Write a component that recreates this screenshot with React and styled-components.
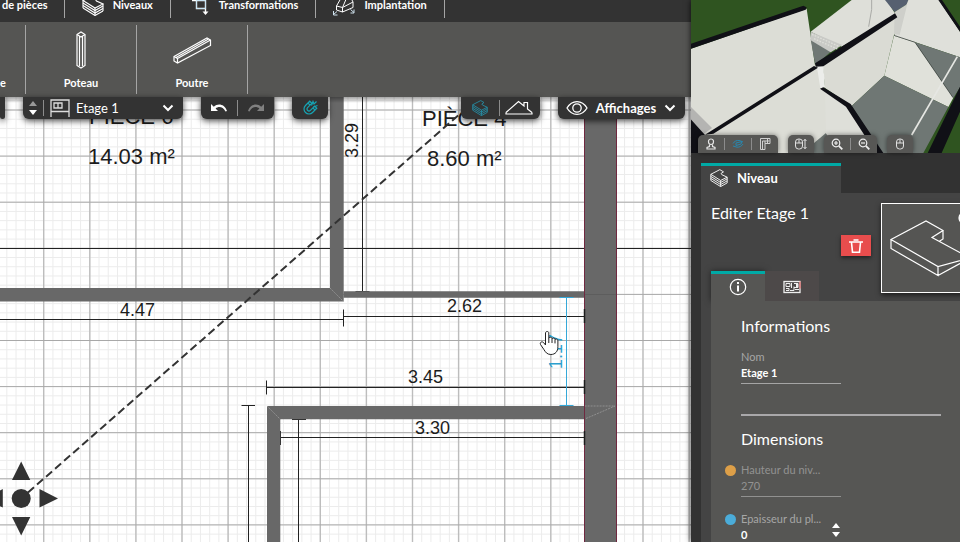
import React, { useState } from 'react';
import styled, { createGlobalStyle } from 'styled-components';

const GlobalStyle = createGlobalStyle`
  * {
    box-sizing: border-box;
  }

  body {
    margin: 0;
    overflow: hidden;
    font-family: Lato, 'Liberation Sans', sans-serif;
    font-size: 11px;
    color: #fff;
    background: #323232;
  }

  button, input, select {
    margin: 0;
    padding: 0;
    border: none;
    background: none;
    color: inherit;
    font: inherit;
  }

  button {
    cursor: pointer;
  }

  svg {
    display: block;
    flex: none;
  }
`;

const Page = styled.div`
  display: grid;
  grid-template-columns: minmax(0, 1fr) 269px;
  height: 100vh;
  overflow: hidden;
`;

const Workspace = styled.main`
  display: flex;
  flex-direction: column;
  min-width: 0;
  min-height: 0;
  overflow: hidden;
`;

const TabBar = styled.nav`
  display: flex;
  align-items: flex-start;
  height: 22px;
  overflow: hidden;
  background: #333;
`;

const TabButton = styled.button`
  display: flex;
  flex: none;
  align-items: center;
  gap: 9px;
  height: 18px;
  padding: ${props => (props.$first ? '0 16px 8px 2px' : '0 17px 8px')};
  border-right: 1px solid #a5a5a5;
  font-weight: 700;
  line-height: 10px;
  white-space: nowrap;
`;

const Ribbon = styled.div`
  display: flex;
  height: 75px;
  padding: 3px 0;
  overflow: hidden;
  background: #555553;
`;

const RibbonButton = styled.button`
  display: flex;
  flex: none;
  flex-direction: column;
  align-items: center;
  justify-content: space-between;
  width: ${props => (props.$edge ? '26px' : '111px')};
  padding: 5px 0 3px;
  border-right: 1px solid #a5a5a5;
  font-weight: 700;
  line-height: 16px;
`;

const RibbonEdgeLabel = styled.span`
  align-self: flex-start;
  margin-top: auto;
`;

const CanvasArea = styled.section`
  position: relative;
  flex: 1;
  min-height: 0;
  background: #fff;
`;

const FloatingTools = styled.div`
  position: absolute;
  top: 0;
  left: 0;
  right: 0;
  display: flex;
  justify-content: space-between;
  padding-right: 6px;
  background: linear-gradient(rgba(0, 0, 0, 0.35), transparent 6px);
`;

const ToolRow = styled.div`
  display: flex;
  gap: 18px;
`;

const ToolGroup = styled.div`
  display: flex;
  align-items: center;
  gap: ${props => props.$gap || '0'};
  width: ${props => props.$width};
  height: 22px;
  padding: ${props => props.$padding || '0'};
  border-radius: 0 0 6px 6px;
  background: #333;
  box-shadow: 0 2px 6px rgba(0, 0, 0, 0.7);
`;

const ToolButton = styled.button`
  display: flex;
  flex: 1;
  align-items: center;
  justify-content: ${props => (props.$spread ? 'space-between' : 'center')};
  height: 100%;
  font-size: 13px;
  font-weight: 700;
`;

const Divider = styled.span`
  flex: none;
  width: 1px;
  height: ${props => props.$height || '16px'};
  background: #8c8c8c;
`;

const SortButtons = styled.div`
  display: flex;
  flex-direction: column;
  gap: 4px;
`;

const ArrowButton = styled.button`
  width: 0;
  height: 0;
  border-left: 4px solid transparent;
  border-right: 4px solid transparent;
  ${props => (props.$down ? 'border-top' : 'border-bottom')}: 5px solid ${props => props.$color || '#fff'};
`;

const LevelSelect = styled.select`
  flex: 1;
  min-width: 0;
  height: 22px;
  appearance: none;
  outline: none;
  font-size: 13px;
`;

const Plan = styled.svg`
  width: 100%;
  height: 100%;
  font-family: 'Liberation Sans', Arial, sans-serif;
`;

const Sidebar = styled.aside`
  position: relative;
  display: flex;
  flex-direction: column;
  min-height: 0;
  overflow: hidden;
  background: #323232;
`;

const SidebarFrame = styled.div`
  position: relative;
  display: grid;
  min-height: 0;
  box-shadow: 0 0 6px rgba(0, 0, 0, 0.8);
`;

const Preview = styled.section`
  position: relative;
  flex: none;
  height: 153px;
`;

const Scene = styled.svg`
  width: 100%;
  height: 100%;
`;

const PreviewTools = styled.div`
  position: absolute;
  left: 7px;
  bottom: 0;
  display: flex;
  gap: 10px;
`;

const PreviewGroup = styled.div`
  display: flex;
  align-items: center;
  height: 18px;
  border-radius: 5px 5px 0 0;
  background: #575755;
  box-shadow: 0 0 5px rgba(0, 0, 0, 0.5);
`;

const PreviewButton = styled.button`
  display: flex;
  align-items: center;
  justify-content: center;
  width: 26px;
  height: 18px;
`;

const Inspector = styled.section`
  display: flex;
  flex: 1;
  flex-direction: column;
  min-height: 0;
  padding: 10px 0 0 10px;
`;

const InspectorTab = styled.button`
  display: flex;
  flex: none;
  align-items: center;
  gap: 9px;
  width: 140px;
  height: 30px;
  padding: 0 0 3px 9px;
  border-top: 3px solid #00aaa6;
  background: #444;
  font-size: 13px;
  font-weight: 700;
`;

const InspectorBody = styled.div`
  display: flex;
  flex: 1;
  flex-direction: column;
  min-height: 0;
  padding-left: 10px;
  background: #444;
`;

const InspectorHead = styled.div`
  display: grid;
  grid-template-columns: 160px 100px;
  column-gap: 10px;
  flex: none;
  height: 78px;
  padding-top: 10px;
`;

const HeadInfo = styled.div`
  display: flex;
  flex-direction: column;
  gap: 12px;
`;

const Title = styled.h1`
  margin: 0;
  font-size: 16px;
  font-weight: 400;
  line-height: 20px;
`;

const DeleteButton = styled.button`
  display: flex;
  align-items: center;
  justify-content: center;
  align-self: flex-end;
  width: 30px;
  height: 21px;
  background: #e84d4d;
  box-shadow: 0 2px 4px rgba(0, 0, 0, 0.5);
`;

const Thumbnail = styled.button`
  display: block;
  width: 100px;
  height: 90px;
  border: 1px solid #fff;
  background: #555553;
  box-shadow: 0 2px 5px rgba(0, 0, 0, 0.6);
`;

const SubTabs = styled.div`
  display: flex;
  flex: none;
`;

const SubTab = styled.button`
  display: flex;
  align-items: center;
  justify-content: center;
  width: 54px;
  height: 30px;
  padding-bottom: 2px;
  border-top: 3px solid ${props => (props.$active ? '#00aaa6' : '#4d4949')};
  background: ${props => (props.$active ? '#565654' : '#4d4949')};
  box-shadow: ${props => (props.$active ? '0 0 6px rgba(0, 0, 0, 0.5)' : 'none')};
`;

const Form = styled.form`
  position: relative;
  display: flex;
  flex: 1;
  flex-direction: column;
  min-height: 0;
  padding: 16px 0 0 30px;
  background: #565654;
`;

const SectionTitle = styled.h2`
  flex: none;
  margin: 0 0 14px;
  font-size: 16px;
  font-weight: 400;
  line-height: 18px;
`;

const Rule = styled.hr`
  flex: none;
  width: 200px;
  margin: 30px 0 14px;
  border: none;
  border-top: 2px solid #a9a8aa;
`;

const FieldRow = styled.div`
  display: flex;
  flex: none;
  align-items: flex-start;
  margin-bottom: ${props => (props.$last ? '0' : '14px')};
  margin-left: -16px;
`;

const Dot = styled.span`
  width: 11px;
  height: 11px;
  margin: 3px 5px 0 0;
  border-radius: 50%;
  background: ${props => props.$color};
`;

const Field = styled.div`
  display: flex;
  flex: none;
  flex-direction: column;
  width: 100px;
  padding-bottom: 2px;
  border-bottom: 1px solid #a5a5a5;
  opacity: ${props => (props.$disabled ? 0.75 : 1)};
`;

const FieldLabel = styled.label`
  color: #a6a6a6;
  font-size: 11px;
  line-height: 16px;
  white-space: nowrap;
`;

const FieldInput = styled.input`
  width: 80px;
  height: 15px;
  margin-bottom: 1px;
  outline: none;
  color: ${props => (props.disabled ? '#a6a6a6' : '#fff')};
  font-size: 11px;
  font-weight: ${props => (props.disabled ? 400 : 700)};
`;

const Spinner = styled.div`
  display: flex;
  flex-direction: column;
  gap: 4px;
  width: 10px;
  margin: 12px 0 0 -9px;
`;

// Stack of floor slabs
const LayersIcon = ({ size = 22, color = '#fff', layers = 3 }) => (
  <svg width={size} height={size} viewBox="0 0 22 22" fill="none" stroke={color} strokeWidth="1.100">
    <path d="M1 6.500 12 .8l4.500 2.700-3 2 1 1.500L21 10l-8 4z" />
    {Array.from({ length: layers }, (_, i) => (
      <path key={i} d={`M1 ${9 + i * 2.5}l12 7.500 8-4.500`} />
    ))}
    <path d="M1 6.500v7.500M21 10v7M13 14v7.500" />
  </svg>
);

const TransformIcon = () => (
  <svg width="22" height="22" viewBox="-4 0 22 22" fill="none" stroke="#fff">
    <path d="M0 6.500h13.500v12M4.500 2v12.500h9" strokeWidth="1.400" />
    <path d="M10.500 17.500h6L13.500 21z" fill="#fff" stroke="none" />
    <path d="M4.500 6.500v8h9v-8z" stroke="#a5d3ee" strokeWidth=".6" />
  </svg>
);

const PlacementIcon = () => (
  <svg width="22" height="22" viewBox="0 0 22 22" fill="none" stroke="#fff">
    <path d="M3.500 12 7.500 5l9.500-3 3 6v5.500L9.500 18l-6-2zM3.500 12l6 1.500V18M9.500 13.500 20 8M9.500 13.500 14 3" />
    <path d="m4 17.500-3.500 3M.5 17v4h4M17.500 15.500l3.500 3M21 15.500v3.500h-3.500" stroke="#cfe2ee" />
  </svg>
);

const PostIcon = () => (
  <svg width="40" height="40" viewBox="0 0 40 40" fill="none" stroke="#fff" strokeWidth="1.200">
    <path d="M16 4.500 20 2l4 2.500v31L20 38l-4-2.500z" />
    <path d="M16 4.500 20 7l4-2.500M18.500 6v30M21.500 6v30" />
  </svg>
);

const BeamIcon = () => (
  <svg width="40" height="40" viewBox="0 0 40 40" fill="none" stroke="#fff" strokeWidth="1.200">
    <path d="M2 26.500 35 8l3.500 2v5.500L5.500 33 2 31z" />
    <path d="m2 26.500 3.500 2V33M5.500 28.500 38.500 10M4 27.500 36.500 9" />
  </svg>
);

const LevelIcon = () => (
  <svg width="20" height="18" viewBox="0 0 20 18" fill="none" stroke="#ddd" strokeWidth="1.300">
    <path d="M1 18V1h18v17M1 12.500h18" />
    <path d="M4 4h8v5H4zM8 4v5" />
  </svg>
);

const Chevron = () => (
  <svg width="12" height="8" viewBox="0 0 12 8" fill="none" stroke="#fff" strokeWidth="2">
    <path d="m1.500 1.500 4.500 4.500 4.500-4.500" />
  </svg>
);

const UndoIcon = ({ color = '#fff', flip }) => (
  <svg width="16" height="10" viewBox="0 0 16 10" fill={color}>
    <g transform={flip ? 'translate(16 0) scale(-1 1)' : undefined}>
      <path d="M0 1v7h7L4.600 5.500C7.500 3 12 3.500 14.500 8.500L16 8C13.500 1 7 0 2.800 3.700z" />
    </g>
  </svg>
);

const MagnetIcon = () => (
  <svg width="16" height="16" viewBox="0 0 16 16" fill="none" stroke="#16a5b5" strokeWidth="1.200">
    <path
      transform="rotate(45 7 9)"
      d="M2 3v6a5 5 0 0 0 10 0V3H9v6a2 2 0 0 1-4 0V3zM2 5.500h3M9 5.500h3"
    />
    <path d="m9.500 5.500 1.500-4 1 2.500 2.500-2.500M11.500 7l4-1.500" />
  </svg>
);

const RoofIcon = () => (
  <svg width="28" height="16" viewBox="0 0 28 16" fill="none" stroke="#fff" strokeWidth="1.200">
    <path d="M1 12.500 13.500 1.500 19 6V2.500h3.500v6.500l4.500 3.500M1 12.500v1.500h26v-1.500" />
  </svg>
);

const EyeIcon = () => (
  <svg width="22" height="16" viewBox="0 0 22 16" fill="none" stroke="#fff" strokeWidth="1.300">
    <path d="M1 8C6-.5 16-.5 21 8 16 16.500 6 16.500 1 8z" />
    <circle cx="11" cy="8" r="4.200" />
  </svg>
);

const PersonIcon = () => (
  <svg width="12" height="12" viewBox="0 0 12 12" fill="none" stroke="#e6e6e6" strokeWidth="1.200">
    <path d="M6 1c2.500 0 2.800 2 2.300 4C7.800 7 4.200 7 3.700 5 3.200 3 3.500 1 6 1zM4.500 7v1.500L2 9.500v1.500h8V9.500l-2.500-1V7" />
  </svg>
);

const OrbitIcon = () => (
  <svg width="12" height="12" viewBox="0 0 12 12" fill="none" stroke="#2887ae">
    <path d="M1 5.500c1-2 4-3.500 6-3 2 .3 4 1.500 4 1.500M11 6c-1 2-4 3.500-6 3.200L1 8M4 5l6-1.500L9 6 4 7.500z" />
  </svg>
);

const WallPlanIcon = () => (
  <svg width="12" height="12" viewBox="0 0 12 12" fill="none" stroke="#d0d0d0">
    <path d="M1.500 11.500v-11h9.500v5H6v6zM3.500 11V3h7M6 5.500V3M8.500 5.500V1" />
  </svg>
);

const MouseIcon = ({ arrows }) => (
  <svg width="12" height="12" viewBox="0 0 12 12" fill="none" stroke="#e0e0e0">
    <g transform={arrows ? 'translate(-2 0)' : undefined}>
      <rect x="2.500" y="1" width="7" height="10" rx="3" />
      <path d="M2.500 5h7M6 1v4" />
    </g>
    {arrows && <path d="M10 1v10M8.500 3 10 1.500 11.500 3M8.500 9l1.500 1.500L11.500 9" />}
  </svg>
);

const MagnifierIcon = ({ plus }) => (
  <svg width="12" height="12" viewBox="0 0 12 12" fill="none" stroke="#eee" strokeWidth="1.200">
    <circle cx="5" cy="5" r="3.800" />
    <path d="m7.800 7.800 3.500 3.500" strokeWidth="1.800" />
    <path d={plus ? 'M3 5h4M5 3v4' : 'M3 5h4'} />
  </svg>
);

const TrashIcon = () => (
  <svg width="14" height="14" viewBox="0 0 14 14" fill="none" stroke="#fff" strokeWidth="1.600">
    <path d="M0 3h14M4.500 1h5M2.500 3.500l1 9.700h7l1-9.700" />
  </svg>
);

const InfoIcon = () => (
  <svg width="18" height="18" viewBox="0 0 18 18" fill="none" stroke="#fff">
    <circle cx="9" cy="9" r="7.700" strokeWidth="1.200" />
    <path d="M9 7.500v6M9 4v2" strokeWidth="2" />
  </svg>
);

const BlueprintIcon = () => (
  <svg width="18" height="14" viewBox="0 0 18 14" fill="none" stroke="#eee">
    <rect x="1" y="1.500" width="16" height="11" strokeWidth="1.300" />
    <path d="M3 3.500h4v3H3zM3 8.500h3v2H3M8.500 3v5M11 3.500h4v4h-4M12 9.500h4M7 10.500h4v-4" />
    <path d="M14 3v4" strokeWidth="2" />
    <path d="M17 1.500v7" stroke="#e55" />
  </svg>
);

const SlabDrawing = () => (
  <svg width="98" height="88" viewBox="0 0 98 88" fill="none" stroke="#fff" strokeWidth="1.200">
    <path d="M9 35.500 44 17l17 9.500-11 7L88 54l-32 8.500zM9 35.500v9L56 71.500v-9M56 71.500 88 54M61 26.500v8.500l-4 2.500" />
    <circle cx="83" cy="14" r="6" fill="#fff" />
  </svg>
);

const MAJOR_STEP = 46.1;
const MINOR_STEP = MAJOR_STEP / 5;

const gridLines = (start, end, step) => {
  const lines = [];
  for (let at = start; at < end; at += step) {
    lines.push(at);
  }
  return lines;
};

const Grid = () => (
  <g>
    <g stroke="#ececec">
      {gridLines(-2.4, 2000, MINOR_STEP).map(x => (
        <path key={`x${x}`} d={`M${x} 97V2000`} />
      ))}
      {gridLines(63.9, 2000, MINOR_STEP).map(y => (
        <path key={`y${y}`} d={`M0 ${y}H2000`} />
      ))}
    </g>
    {gridLines(-2.4, 2000, MAJOR_STEP).map(x => (
      <path key={`x${x}`} d={`M${x} 97V2000`} stroke="#bdbdbd" strokeWidth="1.400" />
    ))}
    {gridLines(63.9, 2000, MAJOR_STEP).map(y => (
      <path key={`y${y}`} d={`M0 ${y}H2000`} stroke="#a8a8a8" />
    ))}
    <path d="M0 248.500H2000" stroke="#222" />
  </g>
);

const FloorPlan = () => (
  <Plan viewBox="0 97 691 445" preserveAspectRatio="xMinYMin slice" role="img" aria-label="Plan Etage 1">
    <Grid />
    <g fill="#1c1c1c" fontSize="22">
      <text x="89" y="124">PIÈCE 6</text>
      <text x="88" y="164">14.03 m²</text>
      <text x="422" y="126">PIÈCE 4</text>
      <text x="427" y="166">8.60 m²</text>
    </g>
    <g stroke="#222" fill="none">
      <path d="M0 319.500H344M343.500 309.500v17M344 316.500H585M584.500 309v14" />
      <path d="M266.500 387.500H585M266.500 380.500v14M584.500 380v14" />
      <path d="M280.500 437.500H585M280.500 431v14M584.500 431v14" />
      <path d="M248.500 405.500V2000M241.500 405.500h13.500M298.500 419.500V2000M292 419.500h14" />
      <path d="M362.500 97V291.500M355.500 291.500h14" />
    </g>
    <g fill="#686868">
      <path d="M330 97h13.700v204.500H0V288H330z" />
      <path d="M343.500 291.300H585v6.500H343.500z" />
      <path d="M267 406H585v13.300H280.300V2000H267z" />
      <path d="M584.500 97h32V2000h-32z" />
    </g>
    <path d="M584.500 97V2000M616.500 97V2000" stroke="#702840" />
    <path d="M584.500 309v14M584.500 380v14M584.500 431v14" stroke="#1c1c1c" strokeWidth="1.500" />
    <g stroke="#a0a0a0" strokeWidth="0.700" strokeDasharray="2 1" fill="none">
      <path d="m330 288 13.500 13.500M267 406l13.500 13.500M586 418.500l29-12.500h-30" />
    </g>
    <path d="M585 294.500h31" stroke="#5d5d5d" />
    <g fill="#1c1c1c" fontSize="18">
      <text x="120" y="316">4.47</text>
      <text x="447" y="312">2.62</text>
      <text x="408" y="383">3.45</text>
      <text x="415" y="434">3.30</text>
      <text transform="translate(358 158) rotate(-90)">3.29</text>
    </g>
    <path d="M566.500 297.500v108M559.500 297.500h14M559.500 405.500h14" stroke="#35a8d8" />
    <text fontSize="18" fill="#2c9fce" transform="translate(562 369) rotate(-90)">1.17</text>
    <path d="M28 492.500 462 112" stroke="#333" strokeWidth="2" strokeDasharray="8 4" />
    <g fill="#333">
      <circle cx="21.200" cy="498.500" r="9.500" />
      <path d="M12 480h18.300L21.200 461.500zM12 517h18.300L21.200 535.500zM39.500 489v18.500L58 498.500zM2.800 489v18.500L-16 498.500z" />
    </g>
    <path
      d="M545.500 345v-12c0-2 3.300-2 3.300 0v5c1-1.200 3-1 3.200.6 1-1 2.900-.6 3 .8 1-.9 2.900-.3 2.900 1.400v6c0 4.500-2.500 7.700-7 7.700-4 0-5.500-2.500-7-5l-3.400-5c-1-2.200 1.600-3.400 3-2z"
      fill="#fff"
      stroke="#222"
    />
    <path d="M548.800 338v5M552 338.600v4.400M555 339.400v4" stroke="#222" />
  </Plan>
);

// Walls seen from above: light faces, black cut edges
const HouseScene = () => (
  <Scene viewBox="3 0 807 459" preserveAspectRatio="xMidYMid slice" role="img" aria-label="Vue 3D">
    <path fill="#2f5420" d="M0 0h820v470H0z" />
    <path fill="#dcddd6" d="M0 147 350 26l25 170 18 3 12 70 70 45 97 150H0z" />
    <path fill="#b4b4b2" d="m0 318 66 66-28 20L0 362z" />
    <path fill="#dedfd9" d="M362 95 485 0h105l28 45-163 95z" />
    <path fill="#6f7774" d="m362 118 62 36-48 42z" />
    <path fill="#c9cac6" d="m362 95 95 40-35 22-60-36z" />
    <path fill="#dadbd4" d="m618 48-220 148 7 68 80 54 98-91 29-122 20-57z" />
    <path fill="#566070" d="M585 0h70l-3 12-38 24z" />
    <path fill="#dfe0da" d="M655 0h92l63 95v77L672 125l-60-18z" />
    <path fill="#cecfca" d="m614 36 38-24-23 93-17-3z" />
    <path fill="#e0e1da" d="m612 107 63 20 115 166-15 28-192-94z" />
    <path fill="#6f7774" d="m675 127 135 45v90l-20 32zM583 227l192 94-75 138H575l-90-141zM372 429l36-30 35 60h-71z" />
    <path fill="#dedfd9" d="m405 268 70 45 85 146H440l-32-60z" />
    <path fill="#ecedea" d="m380 196 20 1 5 64-14 3z" />
    <g fill="#101016">
      <path d="m0 132 340-115 10 5-3 7L0 147zM0 355l45 50-20 60H0zM375 190l240-150 7 12-222 147-22 1zM45 404 372 198l12 5L70 401z" />
      <path d="m390 266 10-4 82 50 98 147h-22l-90-139zM745 0h11l54 80v15zM810 260v75l-55 124h-42z" />
    </g>
    <path d="m612 106 63 21 114 166" fill="none" stroke="#34383a" strokeWidth="2" />
    <path d="M545 0v28l-9 52" fill="none" stroke="#a9aaa6" strokeWidth="3" />
    <path d="M802 170 665 405" stroke="#e6e7e3" strokeWidth="5" />
    <path d="m366 103 80 36M372 116l70 31" stroke="#dedfd9" strokeWidth="4" strokeDasharray="5 4" />
  </Scene>
);

const App = () => {
  const [name, setName] = useState('Etage 1');
  const [thickness, setThickness] = useState(0);

  return (
    <>
      <GlobalStyle />
      <Page>
        <Workspace>
          <TabBar>
            <TabButton $first>de pièces</TabButton>
            <TabButton><LayersIcon />Niveaux</TabButton>
            <TabButton><TransformIcon />Transformations</TabButton>
            <TabButton><PlacementIcon />Implantation</TabButton>
          </TabBar>
          <Ribbon>
            <RibbonButton $edge><RibbonEdgeLabel>e</RibbonEdgeLabel></RibbonButton>
            <RibbonButton><PostIcon />Poteau</RibbonButton>
            <RibbonButton><BeamIcon />Poutre</RibbonButton>
          </Ribbon>
          <CanvasArea>
            <FloorPlan />
            <FloatingTools>
              <ToolRow>
                <ToolGroup $width="5px" />
                <ToolGroup $width="160px" $gap="6px" $padding="0 9px 0 6px">
                  <SortButtons>
                    <ArrowButton $color="#999" aria-label="Niveau supérieur" />
                    <ArrowButton $down aria-label="Niveau inférieur" />
                  </SortButtons>
                  <Divider />
                  <LevelIcon />
                  <LevelSelect aria-label="Niveau" defaultValue="Etage 1">
                    <option>Etage 1</option>
                  </LevelSelect>
                  <Chevron />
                </ToolGroup>
                <ToolGroup $width="73px">
                  <ToolButton aria-label="Annuler"><UndoIcon /></ToolButton>
                  <Divider />
                  <ToolButton aria-label="Rétablir"><UndoIcon color="#808080" flip /></ToolButton>
                </ToolGroup>
                <ToolGroup $width="36px">
                  <ToolButton aria-label="Aimanter"><MagnetIcon /></ToolButton>
                </ToolGroup>
              </ToolRow>
              <ToolRow>
                <ToolGroup $width="79px" $padding="0 2px 0 0">
                  <ToolButton aria-label="Niveaux"><LayersIcon size={16} color="#2595b0" /></ToolButton>
                  <Divider />
                  <ToolButton aria-label="Toiture"><RoofIcon /></ToolButton>
                </ToolGroup>
                <ToolGroup $width="127px" $padding="0 9px 0 8px">
                  <ToolButton $spread><EyeIcon />Affichages<Chevron /></ToolButton>
                </ToolGroup>
              </ToolRow>
            </FloatingTools>
          </CanvasArea>
        </Workspace>

        <SidebarFrame>
          <Sidebar>
            <Preview>
              <HouseScene />
              <PreviewTools>
                <PreviewGroup>
                  <PreviewButton aria-label="Visite"><PersonIcon /></PreviewButton>
                  <Divider $height="12px" />
                  <PreviewButton aria-label="Orbite"><OrbitIcon /></PreviewButton>
                  <Divider $height="12px" />
                  <PreviewButton aria-label="Plan"><WallPlanIcon /></PreviewButton>
                </PreviewGroup>
                <PreviewGroup>
                  <PreviewButton aria-label="Déplacement"><MouseIcon arrows /></PreviewButton>
                </PreviewGroup>
                <PreviewGroup>
                  <PreviewButton aria-label="Zoom avant"><MagnifierIcon plus /></PreviewButton>
                  <Divider $height="12px" />
                  <PreviewButton aria-label="Zoom arrière"><MagnifierIcon /></PreviewButton>
                </PreviewGroup>
                <PreviewGroup>
                  <PreviewButton aria-label="Souris"><MouseIcon /></PreviewButton>
                </PreviewGroup>
              </PreviewTools>
            </Preview>

            <Inspector>
              <InspectorTab><LayersIcon size={18} />Niveau</InspectorTab>
              <InspectorBody>
                <InspectorHead>
                  <HeadInfo>
                    <Title>Editer Etage 1</Title>
                    <DeleteButton aria-label="Supprimer"><TrashIcon /></DeleteButton>
                  </HeadInfo>
                  <Thumbnail aria-label="Modèle de dalle"><SlabDrawing /></Thumbnail>
                </InspectorHead>
                <SubTabs>
                  <SubTab $active aria-label="Informations"><InfoIcon /></SubTab>
                  <SubTab aria-label="Plan de fond"><BlueprintIcon /></SubTab>
                </SubTabs>
                <Form onSubmit={e => e.preventDefault()}>
                  <SectionTitle>Informations</SectionTitle>
                  <Field>
                    <FieldLabel htmlFor="name">Nom</FieldLabel>
                    <FieldInput id="name" value={name} onChange={e => setName(e.target.value)} />
                  </Field>
                  <Rule />
                  <SectionTitle>Dimensions</SectionTitle>
                  <FieldRow>
                    <Dot $color="#dd9f48" />
                    <Field $disabled>
                      <FieldLabel htmlFor="height">Hauteur du niv...</FieldLabel>
                      <FieldInput id="height" defaultValue="270" disabled />
                    </Field>
                  </FieldRow>
                  <FieldRow $last>
                    <Dot $color="#4bacd9" />
                    <Field>
                      <FieldLabel htmlFor="thickness">Epaisseur du pl...</FieldLabel>
                      <FieldInput id="thickness" value={thickness} onChange={e => setThickness(Number(e.target.value) || 0)} />
                    </Field>
                    <Spinner>
                      <ArrowButton type="button" aria-label="Augmenter" onClick={() => setThickness(thickness + 1)} />
                      <ArrowButton type="button" $down aria-label="Diminuer" onClick={() => setThickness(thickness - 1)} />
                    </Spinner>
                  </FieldRow>
                </Form>
              </InspectorBody>
            </Inspector>
          </Sidebar>
        </SidebarFrame>
      </Page>
    </>
  );
};

export default App;
